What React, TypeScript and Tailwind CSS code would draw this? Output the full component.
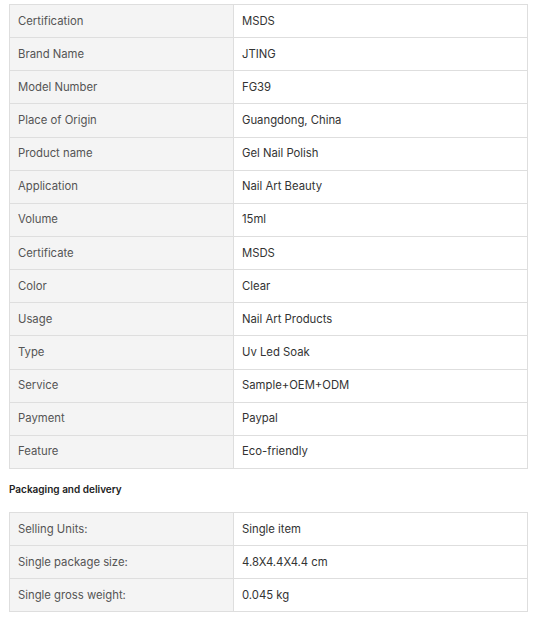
import React from "react";

const specs: [string, string][] = [
  ["Certification", "MSDS"],
  ["Brand Name", "JTING"],
  ["Model Number", "FG39"],
  ["Place of Origin", "Guangdong, China"],
  ["Product name", "Gel Nail Polish"],
  ["Application", "Nail Art Beauty"],
  ["Volume", "15ml"],
  ["Certificate", "MSDS"],
  ["Color", "Clear"],
  ["Usage", "Nail Art Products"],
  ["Type", "Uv Led Soak"],
  ["Service", "Sample+OEM+ODM"],
  ["Payment", "Paypal"],
  ["Feature", "Eco-friendly"],
];

const packaging: [string, string][] = [
  ["Selling Units:", "Single item"],
  ["Single package size:", "4.8X4.4X4.4 cm"],
  ["Single gross weight:", "0.045 kg"],
];

function Table({ rows }: { rows: [string, string][] }) {
  return (
    <table className="w-[519px] border-collapse text-[11.3px]">
      <tbody>
        {rows.map(([k, v]) => (
          <tr key={k} className="h-[33.15px]">
            <td className="w-[224px] border border-[#dedede] bg-[#f4f4f4] px-[8px] py-0 text-[#555]">{k}</td>
            <td className="border border-[#dedede] bg-white px-[8px] py-0 text-[#333]">{v}</td>
          </tr>
        ))}
      </tbody>
    </table>
  );
}

export default function App() {
  return (
    <div className="min-h-[624px] bg-white pl-[9px] pt-[4px]" style={{ fontFamily: "Inter, 'Noto Sans', sans-serif" }}>
      <Table rows={specs} />
      <div className="pt-[14px] pb-[16px] text-[10px] font-semibold leading-[13px] text-[#222]">Packaging and delivery</div>
      <Table rows={packaging} />
    </div>
  );
}
